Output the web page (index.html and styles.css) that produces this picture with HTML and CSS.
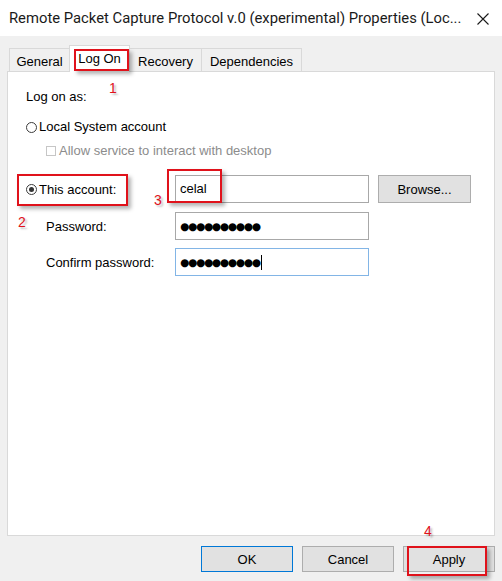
FILE: index.html
```html
<!DOCTYPE html>
<html lang="en">
<head>
	<meta charset="UTF-8">
	<title>Remote Packet Capture Protocol v.0 (experimental) Properties</title>
	<link rel="stylesheet" href="styles.css">
</head>
<body>
<div class="window">
	<div class="titlebar">
		<span class="title">Remote Packet Capture Protocol v.0 (experimental) Properties (Loc...</span>
		<svg class="close" width="12" height="12" viewBox="0 0 12 12">
			<path d="M0.5 0.5 L11.5 11.5 M11.5 0.5 L0.5 11.5" stroke="#1a1a1a" stroke-width="1.1" fill="none"/>
		</svg>
	</div>

	<div class="dialog">
		<div class="tabs">
			<div class="tab tab-general">General</div>
			<div class="tab tab-active">Log On
				<span class="mark mark-1"></span>
				<span class="num num-1">1</span>
			</div>
			<div class="tab tab-recovery">Recovery</div>
			<div class="tab tab-deps">Dependencies</div>
		</div>

		<div class="panel">
			<div class="heading">Log on as:</div>

			<div class="option option-local"><span class="radio"></span>Local System account</div>
			<div class="option option-allow"><span class="checkbox"></span>Allow service to interact with desktop</div>

			<div class="field-row row-account">
				<div class="label label-account">
					<span class="radio radio-on"></span>This account:
					<span class="mark mark-2"></span>
					<span class="num num-2">2</span>
				</div>
				<div class="field field-account">celal
					<span class="mark mark-3"></span>
					<span class="num num-3">3</span>
				</div>
				<button class="btn btn-browse" type="button">Browse...</button>
			</div>

			<div class="field-row row-password">
				<div class="label label-indent">Password:</div>
				<div class="field field-secret">●●●●●●●●●●</div>
			</div>

			<div class="field-row row-confirm">
				<div class="label label-indent">Confirm password:</div>
				<div class="field field-secret field-focus">●●●●●●●●●●<span class="caret"></span></div>
			</div>
		</div>

		<div class="buttons">
			<button class="btn btn-ok" type="button">OK</button>
			<button class="btn" type="button">Cancel</button>
			<button class="btn btn-apply" type="button">Apply
				<span class="mark mark-4"></span>
				<span class="num num-4">4</span>
			</button>
		</div>
	</div>
</div>
</body>
</html>
```

FILE: styles.css
```css
*{
	box-sizing: border-box;
}

body{
	margin: 0;
	background: #f0f0f0;
	font-family: "Liberation Sans", Arial, sans-serif;
	font-size: 13px;
	color: #000;
}

.window{
	width: 502px;
	height: 581px;
	overflow: hidden;
}

/* title bar */
.titlebar{
	height: 36px;
	background: #fff;
	display: flex;
	align-items: center;
	justify-content: space-between;
	padding: 0 13px 0 9px;
}
.title{
	font-family: "Roboto", "Liberation Sans", sans-serif;
	font-size: 14.8px;
	color: #1a1a1a;
	white-space: nowrap;
}
.close{
	display: block;
	margin-top: 1px;
}

.dialog{
	padding: 9px 7px 0 7px;
}

/* tabs */
.tabs{
	display: flex;
	align-items: flex-end;
	height: 26px;
	padding-left: 2px;
}
.tab{
	height: 23px;
	line-height: 25px;
	text-align: center;
	border: 1px solid #d9d9d9;
	border-bottom: 0;
	background: #f0f0f0;
	margin-left: -1px;
}
.tab-general{
	width: 61px;
	margin-left: 0;
}
.tab-active{
	position: relative;
	z-index: 1;
	width: 61px;
	height: 27px;
	line-height: 26px;
	margin-bottom: -1px;
	background: #fff;
}
.tab-recovery{
	width: 73px;
}
.tab-deps{
	width: 101px;
}

/* white page */
.panel{
	height: 465px;
	background: #fff;
	border: 1px solid #d9d9d9;
	padding: 17px 18px 0 18px;
}
.heading{
	height: 16px;
	line-height: 16px;
}
.option{
	display: flex;
	align-items: center;
	height: 16px;
	line-height: 16px;
}
.option-local{
	margin-top: 14px;
}
.option-allow{
	margin-top: 8px;
	padding-left: 20px;
	color: #8c8c8c;
}

.radio{
	width: 11px;
	height: 11px;
	border: 1px solid #3c3c3c;
	border-radius: 50%;
	margin-right: 2px;
	display: flex;
	align-items: center;
	justify-content: center;
	flex-shrink: 0;
}
.radio-on::after{
	content: "";
	width: 5px;
	height: 5px;
	border-radius: 50%;
	background: #333;
}
.checkbox{
	width: 10px;
	height: 10px;
	border: 1px solid #c6c6c6;
	margin-right: 3px;
	flex-shrink: 0;
}

.field-row{
	display: flex;
	align-items: center;
	height: 28px;
}
.row-account{
	margin-top: 16px;
}
.row-password{
	margin-top: 9px;
}
.row-confirm{
	margin-top: 8px;
}
.label{
	width: 149px;
	height: 28px;
	display: flex;
	align-items: center;
	flex-shrink: 0;
}
.label-account{
	position: relative;
}
.label-indent{
	padding-left: 20px;
}

.field{
	width: 194px;
	height: 28px;
	border: 1px solid #a8a8a8;
	padding-left: 4px;
	line-height: 26px;
	background: #fff;
	flex-shrink: 0;
}
.field-account{
	position: relative;
}
.field-secret{
	font-family: "DejaVu Sans", sans-serif;
	font-size: 10.5px;
	letter-spacing: -1.2px;
	display: flex;
	align-items: center;
}
.field-focus{
	border-color: #82b5e6;
}
.caret{
	width: 1px;
	height: 15px;
	background: #000;
	margin-left: 1px;
}

/* buttons */
.btn{
	font-family: "Liberation Sans", Arial, sans-serif;
	font-size: 13px;
	color: #000;
	background: #e1e1e1;
	border: 1px solid #adadad;
	height: 26px;
	width: 92px;
	padding: 0;
}
.btn-browse{
	width: 93px;
	height: 28px;
	margin-left: 9px;
}
.btn-ok{
	border-color: #0078d7;
}
.btn-apply{
	position: relative;
}
.buttons{
	display: flex;
	justify-content: flex-end;
	gap: 9px;
	margin-top: 10px;
}

/* red markers drawn over the screenshot */
.mark{
	position: absolute;
	border: 2px solid #e0121b;
	box-shadow: 3px 3px 4px rgba(0, 0, 0, 0.3);
}
.num{
	position: absolute;
	color: #e0121b;
	font-family: "Liberation Sans", Arial, sans-serif;
	font-size: 14px;
	line-height: 14px;
	text-shadow: 2px 2px 2px rgba(0, 0, 0, 0.25);
}
.mark-1{
	left: 4px;
	top: 3px;
	width: 55px;
	height: 22px;
}
.num-1{
	left: 39px;
	top: 35px;
}
.mark-2{
	left: -9px;
	top: -1px;
	width: 111px;
	height: 32px;
}
.num-2{
	left: -8px;
	top: 40px;
}
.mark-3{
	left: -9px;
	top: -7px;
	width: 55px;
	height: 34px;
}
.num-3{
	left: -22px;
	top: 17px;
}
.mark-4{
	left: 3px;
	top: -1px;
	width: 80px;
	height: 30px;
}
.num-4{
	left: 20px;
	top: -23px;
}
```
